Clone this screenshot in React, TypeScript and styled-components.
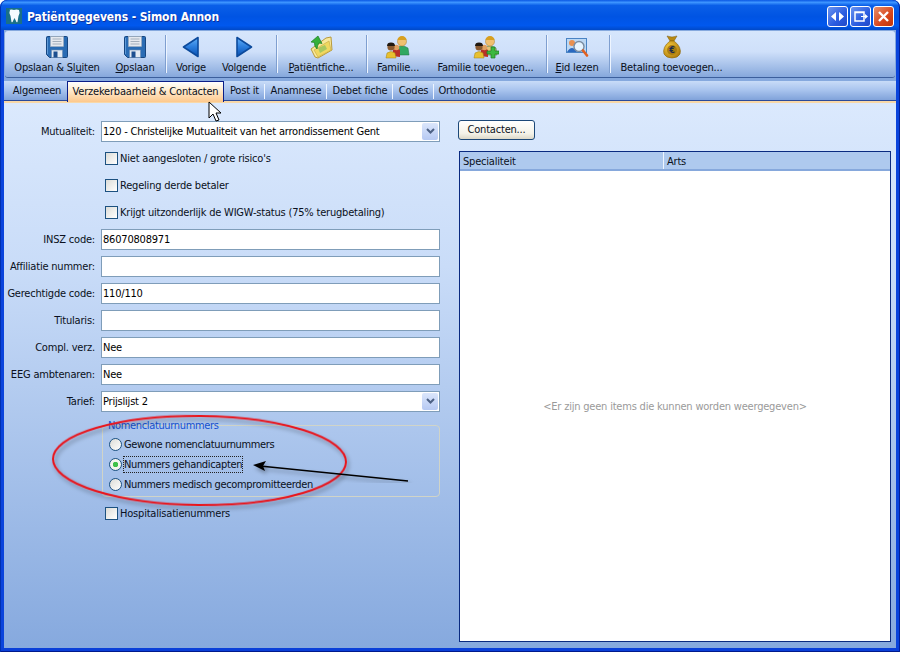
import React from "react";
import styled, { createGlobalStyle } from "styled-components";

const GlobalStyle = createGlobalStyle`
  html, body { margin: 0; padding: 0; background: #fff; }
  * { box-sizing: border-box; }
`;

const FONT = `"DejaVu Sans", Verdana, sans-serif`;

const Win = styled.div`
  position: relative;
  width: 900px;
  height: 652px;
  display: flex;
  flex-direction: column;
  overflow: hidden;
  font-family: ${FONT};
  font-stretch: condensed;
  font-size: 11px;
  letter-spacing: -0.2px;
  color: #000;
  background: #0a3fd8;
  border-radius: 7px 7px 0 0;

  &::after {
    content: "";
    position: absolute;
    inset: 0;
    pointer-events: none;
    border-radius: 7px 7px 0 0;
    box-shadow: inset 1px 0 0 #0030b0, inset -1px 0 0 #00209c, inset 0 -1px 0 #001a8c;
  }
`;
const TitleBar = styled.div`
  height: 30px;
  flex: none;
  display: flex;
  align-items: center;
  padding: 2px 5px 0 6px;
  background: linear-gradient(180deg, #0a58e4 0%, #3d95ff 8%, #0a5fe8 18%, #0054e3 55%, #0058ee 85%, #0049c8 100%);
`;
const Title = styled.div`
  margin: 1px 0 0 5px;
  color: #fff;
  font-size: 12px;
  font-weight: 700;
  letter-spacing: -0.1px;
  text-shadow: 1px 1px 0 #0f2f9c;
`;
const Caption = styled.div`
  margin-left: auto;
  display: flex;
  gap: 2px;
  padding-right: 1px;
`;
const CapBtn = styled.div<{ $red?: boolean }>`
  width: 21px;
  height: 21px;
  display: flex;
  align-items: center;
  justify-content: center;
  border: 1px solid #fff;
  border-radius: 3px;
  background: ${({ $red }) =>
    $red
      ? "linear-gradient(135deg, #e8906c, #d8461c 60%, #c03408)"
      : "linear-gradient(135deg, #6a94f0, #2a5ce0 60%, #2048c8)"};
`;
const Frame = styled.div`
  flex: 1;
  min-height: 0;
  margin: 0 0 4px;
  border-left: 4px solid #0a44dc;
  border-right: 4px solid #0a44dc;
  background: #86a9de;
  display: flex;
  flex-direction: column;
`;
const Toolbar = styled.div`
  flex: none;
  height: 47px;
  margin: 1px 1px 0;
  padding: 3px 0 0 2px;
  display: flex;
  border-radius: 3px;
  border-bottom: 1px solid #3c5f9c;
  background: linear-gradient(180deg, #d6e6fc 0%, #cfe0fa 45%, #86a8dc 100%);
`;
const ToolButton = styled.div<{ $w: number }>`
  width: ${({ $w }) => $w}px;
  flex: none;
  display: flex;
  flex-direction: column;
  align-items: center;
  white-space: nowrap;
`;
const ToolIcon = styled.div`
  height: 26px;
  display: flex;
  align-items: center;
  justify-content: center;
`;
const ToolLabel = styled.div`
  margin-top: 1px;
  line-height: 14px;
  color: #0a1020;
  u { text-decoration: underline; }
`;
const ToolSep = styled.div<{ $l: number; $r: number }>`
  width: 1px;
  height: 38px;
  flex: none;
  margin: 1px ${({ $r }) => $r}px 0 ${({ $l }) => $l}px;
  background: #7f9fd0;
  box-shadow: 1px 0 0 #eef5ff;
`;
const Tabs = styled.div`
  flex: none;
  height: 22px;
  margin-top: 3px;
  padding-left: 3px;
  display: flex;
  background: linear-gradient(180deg, #c9dcf8 0%, #a9c4ee 45%, #7c9fd8 100%);
  border-bottom: 2px solid #f8d8a8;
  box-shadow: inset 0 -1px 0 #2a4a9a;
`;
const Tab = styled.div<{ $w: number; $active?: boolean; $sep?: boolean }>`
  position: relative;
  width: ${({ $w }) => $w}px;
  flex: none;
  height: ${({ $active }) => ($active ? "21px" : "20px")};
  line-height: 19px;
  text-align: center;
  white-space: nowrap;
  color: #0a1020;
  ${({ $active }) =>
    $active &&
    `
    border: 1px solid #0a1e88;
    border-bottom: none;
    background: linear-gradient(180deg, #fff 0%, #fff2dc 30%, #fdc88c 100%);
  `}
  ${({ $sep }) =>
    $sep &&
    `
    &::after {
      content: "";
      position: absolute;
      right: 0;
      top: 3px;
      height: 15px;
      width: 1px;
      background: #eef5ff;
    }
  `}
`;
const Content = styled.div`
  flex: 1;
  min-height: 0;
  padding: 18px 5px 6px 0;
  display: grid;
  grid-template-columns: 436px 432px;
  column-gap: 19px;
  background: linear-gradient(180deg, #dbe9fd 0%, #c9dcf8 30%, #86a9de 100%);
`;
const Form = styled.div`
  display: flex;
  flex-direction: column;
  gap: 6px;
`;
const Row = styled.div`
  height: 21px;
  display: grid;
  grid-template-columns: 91px 339px;
  column-gap: 6px;
  align-items: center;
`;
const Label = styled.div`
  text-align: right;
  white-space: nowrap;
  color: #0a1020;
`;
const Input = styled.div`
  height: 21px;
  line-height: 19px;
  padding-left: 1px;
  background: #fff;
  border: 1px solid #7f9db9;
  white-space: nowrap;
  overflow: hidden;
`;
const Combo = styled(Input)`
  position: relative;
`;
const ComboBtn = styled.div`
  position: absolute;
  right: 1px;
  top: 1px;
  width: 16px;
  height: 17px;
  display: flex;
  align-items: center;
  justify-content: center;
  background: linear-gradient(180deg, #dbe6fb, #b6c9f3);
  border-radius: 2px;
`;
const CheckRow = styled.label`
  height: 21px;
  display: flex;
  align-items: center;
  gap: 2px;
  padding-left: 97px;
  white-space: nowrap;
  color: #0a1020;
`;
const Box = styled.span`
  width: 13px;
  height: 13px;
  flex: none;
  margin-left: 4px;
  border: 1px solid #1c5180;
  background: linear-gradient(135deg, #dcdcd7, #ffffff);
`;
const Group = styled.div`
  position: relative;
  height: 72px;
  margin: 7px 0 0 98px;
  width: 338px;
  border: 1px solid #d0d4c8;
  border-radius: 4px;
  padding: 8px 0 0 6px;
  letter-spacing: -0.35px;
`;
const GroupTitle = styled.div`
  position: absolute;
  left: 5px;
  top: -7px;
  line-height: 13px;
  color: #1450d2;
`;
const RadioRow = styled.div`
  height: 20px;
  display: flex;
  align-items: center;
  gap: 2px;
  white-space: nowrap;
  color: #0a1020;
`;
const RadioDot = styled.span<{ $on?: boolean }>`
  width: 13px;
  height: 13px;
  flex: none;
  border: 1px solid #1c5180;
  border-radius: 50%;
  background: ${({ $on }) =>
    $on
      ? "radial-gradient(circle, #3fc04a 0 2.5px, #f4f4ee 3px)"
      : "linear-gradient(135deg, #dcdcd7, #fff)"};
`;
const RadioText = styled.span<{ $focus?: boolean }>`
  line-height: 15px;
  ${({ $focus }) => $focus && "outline: 1px dotted #222;"}
`;
const Right = styled.div`
  display: flex;
  flex-direction: column;
  align-items: flex-start;
  min-height: 0;
`;
const PlainButton = styled.div`
  width: 77px;
  height: 20px;
  margin: -1px 0 0 -1px;
  line-height: 18px;
  text-align: center;
  background: linear-gradient(180deg, #fff, #f4f2e8 70%, #dcd8c8);
  border: 1px solid #1c4878;
  border-radius: 3px;
  color: #0a1020;
`;
const List = styled.div`
  margin-top: 11px;
  width: 100%;
  flex: 1;
  display: flex;
  flex-direction: column;
  border: 1px solid #0a2a80;
  background: #fff;
`;
const ListHead = styled.div`
  flex: none;
  height: 19px;
  display: flex;
  background: #aec9ee;
  border-bottom: 2px solid #86a8dc;
`;
const HeadCell = styled.div<{ $w?: number }>`
  ${({ $w }) => ($w ? `width: ${$w}px;` : "flex: 1;")}
  line-height: 19px;
  padding-left: 3px;
  ${({ $w }) => $w && "border-right: 1px solid #eef5ff;"}
  color: #0a1020;
`;
const Empty = styled.div`
  flex: 1;
  display: flex;
  align-items: center;
  justify-content: center;
  color: #9a9a9a;
`;
const Overlay = styled.svg`
  position: absolute;
  left: 0;
  top: 0;
  pointer-events: none;
`;

const Floppy = () => (
  <svg width="22" height="22" viewBox="0 0 22 22">
    <path d="M1.500.5h19a1 1 0 0 1 1 1v19a1 1 0 0 1-1 1H3.500l-3-3V1.500a1 1 0 0 1 1-1z" fill="#2a6cb4" stroke="#174680" />
    <rect x="4.500" y=".5" width="13" height="10" fill="#e6e9ee" stroke="#a4afbc" strokeWidth=".6" />
    <path d="M6.500 3h9M6.500 5.500h9M6.500 8h9" stroke="#a4afbc" />
    <path d="M1.500 2v16" stroke="#5f9ad8" />
    <rect x="5.500" y="14" width="11" height="7.500" fill="#e4eaf2" stroke="#6c8cb4" strokeWidth=".6" />
    <rect x="7.500" y="15.500" width="4" height="6" fill="#1d4f90" />
  </svg>
);
const Arrow = ({ right }: { right?: boolean }) => (
  <svg width="20" height="24" viewBox="0 0 20 24">
    <defs>
      <linearGradient id="arr" x1="0" y1="0" x2="0" y2="1">
        <stop offset="0" stopColor="#62b0f8" />
        <stop offset=".5" stopColor="#2a7cdc" />
        <stop offset="1" stopColor="#0a50b0" />
      </linearGradient>
    </defs>
    <path
      d={right ? "M3 2.500 L17.500 12 L3 21.500 Z" : "M17 2.500 L2.500 12 L17 21.500 Z"}
      fill="url(#arr)"
      stroke="#0c4a9c"
      strokeWidth="1.600"
      strokeLinejoin="round"
    />
  </svg>
);
const FolderIcon = () => (
  <svg width="24" height="24" viewBox="0 0 24 24">
    <path d="M2 14 L17 3 L22 2 L23 15 L9 23 L6 22 Z" fill="#f8e89a" stroke="#b89a3c" />
    <path d="M5 15 L20 6 L22 15 L9 22 Z" fill="#f0d860" stroke="#c8a840" strokeWidth=".6" />
    <path d="M9 13 L16 10 L18 14 L11 18 Z" fill="#a8c860" />
    <path d="M9 1 L2 7 L5.500 7.500 Q5 11 8 14 Q8.500 10 10 8 L13 8.500 Z" fill="#34b03a" stroke="#1c7c24" strokeWidth=".7" />
  </svg>
);
const People = ({ plus }: { plus?: boolean }) => (
  <svg width="26" height="24" viewBox="0 0 26 24">
    <path d="M10 20 L11 13 Q17 9 23 13 L24 20 Z" fill={plus ? "#e4c478" : "#32a860"} stroke="#1c7040" strokeWidth=".5" />
    <circle cx="17" cy="6.500" r="4.500" fill="#f0c070" stroke="#a87820" strokeWidth=".5" />
    <path d="M12.500 5a4.500 4 0 0 1 9 0z" fill="#d8a020" />
    <path d="M7 21 L8 15 Q12 12 15 15 L15 22 Z" fill="#b83028" />
    <circle cx="11.500" cy="12.500" r="2.800" fill="#e0a060" />
    <circle cx="6" cy="12" r="3.600" fill="#8a5a30" />
    <path d="M2 11a4 3.400 0 0 1 8 0z" fill="#201810" />
    <path d="M1 23 L2 18 Q6 15 10 18 L11 23 Z" fill="#e8c030" stroke="#a08010" strokeWidth=".5" />
    {plus && <path d="M18 12h4v4h4v3h-4v4h-4v-4h-4v-3h4z" fill="#3cb840" stroke="#1c7c24" strokeWidth=".7" />}
  </svg>
);
const EidIcon = () => (
  <svg width="24" height="24" viewBox="0 0 24 24">
    <rect x="1.500" y="3.500" width="20" height="14" fill="#bcd8f4" stroke="#4a84c4" />
    <circle cx="7" cy="8" r="3" fill="#e89050" />
    <path d="M2 17q5-8 10 0z" fill="#2a68c0" />
    <circle cx="14" cy="11.500" r="5" fill="#e6f4ff" stroke="#7a8ca0" strokeWidth="1.400" />
    <path d="M18 15.500l4 5" stroke="#e06020" strokeWidth="2.600" strokeLinecap="round" />
  </svg>
);
const MoneyBag = () => (
  <svg width="20" height="24" viewBox="0 0 20 24">
    <defs>
      <radialGradient id="bag" cx=".35" cy=".35" r=".8">
        <stop offset="0" stopColor="#f4c83c" />
        <stop offset="1" stopColor="#a87408" />
      </radialGradient>
    </defs>
    <path d="M5 1 Q10 3 15 1 L12 6 L8 6 Z" fill="#b88810" stroke="#7c5c08" strokeWidth=".5" />
    <path d="M8 6 L12 6 Q20 12 18 19 Q16 23 10 23 Q4 23 2 19 Q0 12 8 6Z" fill="url(#bag)" stroke="#8a6408" strokeWidth=".6" />
    <circle cx="10" cy="15" r="5" fill="#a87c10" />
    <text x="10" y="18" fontSize="9" textAnchor="middle" fill="#1a2a50" fontWeight="700">€</text>
  </svg>
);
const ToothLogo = () => (
  <svg width="16" height="16" viewBox="0 0 16 16">
    <rect width="16" height="16" fill="#1a7088" />
    <path d="M3 2q2.500-1 5 0q2.500-1 5 0q1.500 3-.5 6l-1 6q-1 1-1.500-1l-1.500-3-1.500 3q-.5 2-1.500 1l-1-6q-2-3-.5-6z" fill="#f4fbff" />
  </svg>
);
const Chevron = () => (
  <svg width="9" height="7" viewBox="0 0 9 7">
    <path d="M1 1 L4.500 4.500 L8 1" fill="none" stroke="#4d6185" strokeWidth="2" />
  </svg>
);

const tools = [
  { key: "sluiten", w: 100, icon: <Floppy />, label: <>Opslaan &amp; Sl<u>u</u>iten</> },
  { key: "opslaan", w: 56, icon: <Floppy />, label: <><u>O</u>pslaan</>, sep: [2, 2] },
  { key: "vorige", w: 46, icon: <Arrow />, label: "Vorige" },
  { key: "volgende", w: 60, icon: <Arrow right />, label: "Volgende", sep: [2, 2] },
  { key: "fiche", w: 84, icon: <FolderIcon />, label: <><u>P</u>atiëntfiche...</>, sep: [3, 2] },
  { key: "familie", w: 58, icon: <People />, label: "Familie..." },
  { key: "toevoegen", w: 117, icon: <People plus />, label: "Familie toevoegen...", sep: [2, 2] },
  { key: "eid", w: 56, icon: <EidIcon />, label: <><u>E</u>id lezen</>, sep: [4, 2] },
  { key: "betaling", w: 119, icon: <MoneyBag />, label: "Betaling toevoegen..." },
];

const tabs = [
  { name: "Algemeen", w: 60 },
  { name: "Verzekerbaarheid & Contacten", w: 157, active: true },
  { name: "Post it", w: 41, sep: true },
  { name: "Anamnese", w: 62, sep: true },
  { name: "Debet fiche", w: 66, sep: true },
  { name: "Codes", w: 41, sep: true },
  { name: "Orthodontie", w: 66 },
];

const textFields = [
  { label: "INSZ code:", value: "86070808971" },
  { label: "Affiliatie nummer:", value: "" },
  { label: "Gerechtigde code:", value: "110/110" },
  { label: "Titularis:", value: "" },
  { label: "Compl. verz.", value: "Nee" },
  { label: "EEG ambtenaren:", value: "Nee" },
];

const App: React.FC = () => (
  <>
    <GlobalStyle />
    <Win>
      <TitleBar>
        <ToothLogo />
        <Title>Patiëntgegevens - Simon Annon</Title>
        <Caption>
          <CapBtn>
            <svg width="13" height="11" viewBox="0 0 13 11"><path d="M5 1v9L0 5.500zM8 1v9l5-4.500z" fill="#fff" /></svg>
          </CapBtn>
          <CapBtn>
            <svg width="14" height="12" viewBox="0 0 14 12"><path d="M1 2h9v9H1zM1 2.500h9" fill="none" stroke="#fff" strokeWidth="1.500" /><path d="M7 6h4V4l3 2.500L11 9V7H7z" fill="#fff" /></svg>
          </CapBtn>
          <CapBtn $red>
            <svg width="13" height="13" viewBox="0 0 13 13"><path d="M2 2l9 9M11 2l-9 9" stroke="#fff" strokeWidth="2.400" /></svg>
          </CapBtn>
        </Caption>
      </TitleBar>
      <Frame>
        <Toolbar>
          {tools.map((t) => (
            <React.Fragment key={t.key}>
              <ToolButton $w={t.w}>
                <ToolIcon>{t.icon}</ToolIcon>
                <ToolLabel>{t.label}</ToolLabel>
              </ToolButton>
              {t.sep && <ToolSep $l={t.sep[0]} $r={t.sep[1]} />}
            </React.Fragment>
          ))}
        </Toolbar>
        <Tabs>
          {tabs.map((t) => (
            <Tab key={t.name} $w={t.w} $active={t.active} $sep={t.sep}>
              {t.name}
            </Tab>
          ))}
        </Tabs>
        <Content>
          <Form>
            <Row>
              <Label>Mutualiteit:</Label>
              <Combo>
                120 - Christelijke Mutualiteit van het arrondissement Gent
                <ComboBtn><Chevron /></ComboBtn>
              </Combo>
            </Row>
            <CheckRow><Box />Niet aangesloten / grote risico's</CheckRow>
            <CheckRow><Box />Regeling derde betaler</CheckRow>
            <CheckRow><Box />Krijgt uitzonderlijk de WIGW-status (75% terugbetaling)</CheckRow>
            {textFields.map((f) => (
              <Row key={f.label}>
                <Label>{f.label}</Label>
                <Input>{f.value}</Input>
              </Row>
            ))}
            <Row>
              <Label>Tarief:</Label>
              <Combo>
                Prijslijst 2
                <ComboBtn><Chevron /></ComboBtn>
              </Combo>
            </Row>
            <Group>
              <GroupTitle>Nomenclatuurnummers</GroupTitle>
              <RadioRow><RadioDot /><RadioText>Gewone nomenclatuurnummers</RadioText></RadioRow>
              <RadioRow><RadioDot $on /><RadioText $focus>Nummers gehandicapten</RadioText></RadioRow>
              <RadioRow><RadioDot /><RadioText>Nummers medisch gecompromitteerden</RadioText></RadioRow>
            </Group>
            <CheckRow><Box />Hospitalisatienummers</CheckRow>
          </Form>
          <Right>
            <PlainButton>Contacten...</PlainButton>
            <List>
              <ListHead>
                <HeadCell $w={204}>Specialiteit</HeadCell>
                <HeadCell>Arts</HeadCell>
              </ListHead>
              <Empty>&lt;Er zijn geen items die kunnen worden weergegeven&gt;</Empty>
            </List>
          </Right>
        </Content>
      </Frame>
      <Overlay width="900" height="652" viewBox="0 0 900 652">
        <defs>
          <filter id="sh" x="-10%" y="-10%" width="120%" height="120%">
            <feDropShadow dx="2" dy="3" stdDeviation="2" floodColor="#000" floodOpacity=".35" />
          </filter>
        </defs>
        <ellipse cx="199.500" cy="460.500" rx="146.500" ry="44.500" fill="none" stroke="#e8141c" strokeWidth="2" transform="rotate(0.6 199.500 460.500)" filter="url(#sh)" />
        <g filter="url(#sh)">
          <path d="M408 481 L260 466" stroke="#000" strokeWidth="1.600" />
          <path d="M253 465 L266 461 L263 466 L265 471 Z" fill="#000" />
        </g>
        <path d="M209 102 L209 118 L213 114 L216 121 L219 120 L216 113 L221 113 Z" fill="#fff" stroke="#000" strokeWidth="1" />
      </Overlay>
    </Win>
  </>
);

export default App;
